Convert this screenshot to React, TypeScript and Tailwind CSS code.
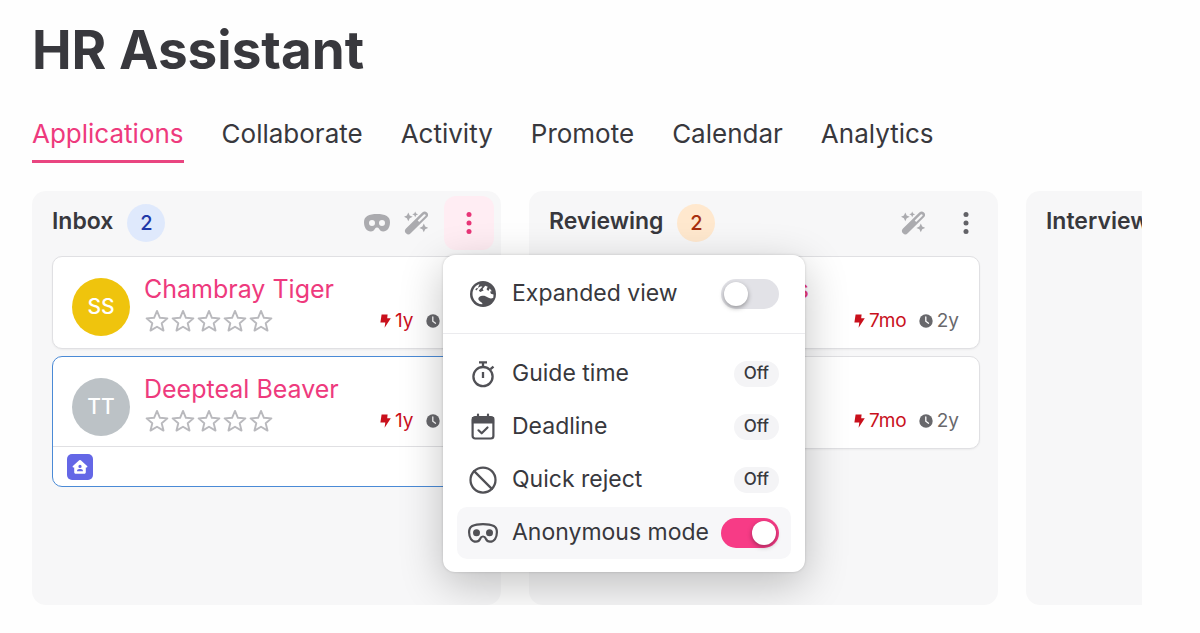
import { useState, type ReactNode } from 'react'
import { Ban } from 'lucide-react'

type Candidate = {
  name: string
  initials: string
  avatarClass: string
  activeAgo: string
  appliedAgo: string
  selected?: boolean
}

const tabs = ['Applications', 'Collaborate', 'Activity', 'Promote', 'Calendar', 'Analytics']

const inbox: Candidate[] = [
  { name: 'Chambray Tiger', initials: 'SS', avatarClass: 'bg-[#efc40d]', activeAgo: '1y', appliedAgo: '1y' },
  { name: 'Deepteal Beaver', initials: 'TT', avatarClass: 'bg-[#bcc2c6]', activeAgo: '1y', appliedAgo: '1y', selected: true },
]

const reviewing: Candidate[] = [
  { name: 'Coral Badgers', initials: 'CB', avatarClass: 'bg-teal-500', activeAgo: '7mo', appliedAgo: '2y' },
  { name: 'Amber Otter', initials: 'AO', avatarClass: 'bg-sky-500', activeAgo: '7mo', appliedAgo: '2y' },
]

function MaskIcon() {
  return (
    <svg className="h-[18px] w-[26px]" viewBox="0 0 26 18" fill="currentColor" fillRule="evenodd" aria-hidden="true">
      <path d="M3.200 2C5.800.6 9.200 0 13 0s7.200.6 9.800 2C25 3.300 26 5.500 26 8.300 26 13.800 23.200 17.500 19.200 17.500c-2.200 0-3.300-1-4.300-2.900-.8-1.600-3-1.600-3.800 0-1 1.900-2.100 2.900-4.300 2.900C2.800 17.500 0 13.800 0 8.300 0 5.500 1 3.300 3.200 2zM8 5.900a3 3 0 1 0 0 6 3 3 0 0 0 0-6zm10 0a3 3 0 1 0 0 6 3 3 0 0 0 0-6z" />
    </svg>
  )
}

function MaskOutlineIcon() {
  return (
    <svg className="h-5 w-[30px] shrink-0" viewBox="0 0 30 20" fill="none" stroke="currentColor" strokeWidth="2.200" aria-hidden="true">
      <path d="M4.200 3C7 1.600 10.800 1.100 15 1.100s8 .5 10.800 1.900c2 1.100 3.100 3.300 3.100 6.300 0 5.400-2.700 9.400-6.900 9.400-2.300 0-3.400-1.200-4.300-3.200-.5-1.300-1.500-2-2.700-2s-2.200.7-2.700 2c-.9 2-2 3.200-4.300 3.200-4.200 0-6.900-4-6.900-9.400C1.100 6.300 2.200 4.100 4.200 3z" />
      <circle cx="8.500" cy="9.700" r="3.500" fill="currentColor" stroke="none" />
      <circle cx="21.500" cy="9.700" r="3.500" fill="currentColor" stroke="none" />
    </svg>
  )
}

function WandIcon() {
  return (
    <svg className="size-6" viewBox="0 0 24 24" fill="currentColor" fillRule="evenodd" aria-hidden="true">
      <path d="M18.300 1.600a3.300 3.300 0 0 1 4.700 4.700L6.700 22.300a3.300 3.300 0 0 1-4.700-4.700zm1.500 1.900-6.100 6 1.500 1.500 6.100-6a1.060 1.060 0 0 0-1.500-1.500z" />
      <path d="M4.300 1.500 5.700 4.400 8.700 5.800 5.700 7.200 4.300 10.200 2.900 7.200 0 5.800 2.900 4.400zM11.200.4l.9 2 2 .9-2 .9-.9 2-.9-2-2-.9 2-.9zM19.800 12.600l1.400 2.900 3 1.400-3 1.400-1.400 3-1.400-3-3-1.400 3-1.400z" />
    </svg>
  )
}

function DotsIcon() {
  return (
    <svg className="h-6 w-1.5" viewBox="0 0 6 24" fill="currentColor" aria-hidden="true">
      <circle cx="3" cy="3.500" r="2.500" />
      <circle cx="3" cy="12" r="2.500" />
      <circle cx="3" cy="20.500" r="2.500" />
    </svg>
  )
}

function BoltIcon() {
  return (
    <svg className="h-[14px] w-[11px]" viewBox="0 0 11 14" fill="currentColor" aria-hidden="true">
      <path d="M1.600.4h6L7.200 4.200h3.600L4.600 13.800l.7-5.400H.4z" />
    </svg>
  )
}

function ClockIcon() {
  return (
    <svg className="size-[14px]" viewBox="0 0 14 14" aria-hidden="true">
      <circle cx="7" cy="7" r="6.700" fill="currentColor" />
      <path d="M6.800 3v4.200l2.700 2" fill="none" stroke="#fff" strokeWidth="1.300" strokeLinecap="round" />
    </svg>
  )
}

function StarIcon() {
  return (
    <svg className="size-[26px]" viewBox="0 0 26 26" fill="none" stroke="currentColor" strokeWidth="1.900" strokeLinejoin="round" aria-hidden="true">
      <path d="m13 2.900 2.900 6.900 7.500.6-5.700 4.900 1.800 7.300L13 18.700l-6.500 3.900 1.800-7.300-5.700-4.900 7.500-.6z" />
    </svg>
  )
}

function GlobeIcon() {
  return (
    <svg className="size-[26px] shrink-0" viewBox="0 0 26 26" aria-hidden="true">
      <circle cx="13" cy="13" r="13" fill="currentColor" />
      <path
        d="M9.500 3C5.300 4.500 2.500 8.400 2.500 13c0 4.600 3 8.500 7.200 9.900l2.600.3c1-1.400-2.600-2.600-3.600-4.200-1-2 .8-4 3.300-4.200 2.600-.2 4 .4 5.500 1.500 1.800 1.300 4.200 1.500 5.800.4l.2-3.200-2.600-.8-.8-2.300 1.700-.2-2-2.600-1.500 2.300-1.800-1.600 1.200-2.600-2.500-.9-2.600 3.200 1 1.400-3.400 1.600-1.400-1.400 3.600-3.800-1.600-.6-3 1.900z"
        fill="#fff"
      />
      <path d="m5.300 8.300 1.600-1.400 1.300.7-2 1.800zM9 4.600l2.300-.8-1 1.800z" fill="currentColor" />
    </svg>
  )
}

function StopwatchIcon() {
  return (
    <svg className="size-7 shrink-0" viewBox="0 0 28 28" fill="none" stroke="currentColor" strokeWidth="2.300" aria-hidden="true">
      <circle cx="14" cy="16.600" r="9.600" />
      <path d="M10 2.300h8M14 2.500V7M21.500 9.200l3-2.600M14 12v6" />
    </svg>
  )
}

function CalendarCheckIcon() {
  return (
    <svg className="size-7 shrink-0" viewBox="0 0 28 28" fill="none" stroke="currentColor" strokeWidth="2.200" strokeLinecap="round" aria-hidden="true">
      <rect x="3.600" y="4.200" width="20.800" height="21.300" rx="2.500" />
      <path d="M4 5h20v4.500H4zM9 1.600v3M19 1.600v3" fill="currentColor" />
      <path d="m9.500 17.300 3.200 3 5.800-5.800" strokeLinejoin="round" />
    </svg>
  )
}

function HouseUserIcon() {
  return (
    <svg className="size-4" viewBox="0 0 16 16" fill="currentColor" fillRule="evenodd" aria-hidden="true">
      <path d="M7.200 1.300a1.200 1.200 0 0 1 1.600 0l6.300 5.600c.6.600.3 1.500-.5 1.500h-.8v4.800c0 .9-.6 1.500-1.500 1.500H3.700c-.9 0-1.500-.6-1.500-1.500V8.400h-.8c-.8 0-1.100-.9-.5-1.500zM8 5.800a1.600 1.600 0 1 0 0 3.200 1.600 1.600 0 0 0 0-3.200zM5 12.300h6c0-1.400-1-2.300-2.200-2.300H7.200C6 10 5 10.900 5 12.300z" />
    </svg>
  )
}

function CandidateCard({ candidate }: { candidate: Candidate }) {
  return (
    <article
      className={`rounded-[10px] border bg-white ${
        candidate.selected ? 'border-[#4a8ad6]' : 'border-[#e0e0e3] pb-0.5 shadow-xs'
      }`}
    >
      <div className="flex items-center gap-3.5 pt-4 pr-5 pb-2.5 pl-[19px]">
        <div
          className={`mt-1 flex size-[58px] shrink-0 items-center justify-center rounded-full text-[21px] font-medium text-white ${candidate.avatarClass}`}
        >
          {candidate.initials}
        </div>
        <div className="min-w-0 flex-1">
          <a href="#" className="block truncate text-[25px] leading-[33px] text-[#ee3a7d]">
            {candidate.name}
          </a>
          <div className="flex h-[30px] items-center justify-between">
            <div className="flex text-[#b9b9bd]" role="img" aria-label="Not rated">
              {[1, 2, 3, 4, 5].map((star) => (
                <StarIcon key={star} />
              ))}
            </div>
            <div className="flex items-center gap-3 text-[19px] leading-7">
              <span className="flex items-center gap-1 text-[#c9101c]">
                <BoltIcon />
                {candidate.activeAgo}
              </span>
              <span className="flex items-center gap-1 text-[#68686c]">
                <ClockIcon />
                {candidate.appliedAgo}
              </span>
            </div>
          </div>
        </div>
      </div>
      {candidate.selected && (
        <div className="border-t border-[#e0e0e3] px-3.5 pt-[7px] pb-1.5">
          <span className="flex size-[26px] items-center justify-center rounded-[5px] bg-[#6467e6] text-white">
            <HouseUserIcon />
          </span>
        </div>
      )}
    </article>
  )
}

function Switch({ id, checked, onChange }: { id: string; checked: boolean; onChange: (value: boolean) => void }) {
  return (
    <input
      id={id}
      type="checkbox"
      role="switch"
      checked={checked}
      onChange={(e) => onChange(e.target.checked)}
      className="flex h-[30px] w-[58px] shrink-0 cursor-pointer appearance-none items-center rounded-full bg-[#e2e2e7] px-[3px] before:size-6 before:rounded-full before:bg-white before:shadow-[0_2px_5px_rgba(0,0,0,0.35)] before:content-[''] checked:justify-end checked:bg-[#f73b86]"
    />
  )
}

function MenuOption({ icon, label }: { icon: ReactNode; label: string }) {
  return (
    <button type="button" className="flex h-[52px] w-full items-center rounded-[10px] px-3 text-left">
      <span className="flex w-7 justify-center text-[#515156]">{icon}</span>
      <span className="ml-[15px] flex-1">{label}</span>
      <span className="flex h-[26px] items-center rounded-full bg-[#f4f4f6] px-2.5 text-[17px] font-medium">Off</span>
    </button>
  )
}

function ColumnMenu() {
  const [expanded, setExpanded] = useState(false)
  const [anonymous, setAnonymous] = useState(true)

  return (
    <div className="absolute top-[59px] -left-px z-10 w-[362px] rounded-xl bg-white text-[23px] text-[#38383d] shadow-[0_12px_44px_rgba(0,0,0,0.24),0_0_3px_rgba(0,0,0,0.16)]">
      <div className="border-b border-[#ebebee] px-3.5 py-[13px]">
        <label htmlFor="expanded" className="flex h-[52px] items-center px-3">
          <span className="flex w-7 justify-center text-[#515156]">
            <GlobeIcon />
          </span>
          <span className="ml-[15px] flex-1">Expanded view</span>
          <Switch id="expanded" checked={expanded} onChange={setExpanded} />
        </label>
      </div>
      <div className="flex flex-col gap-px px-3.5 pt-3.5 pb-[13px]">
        <MenuOption icon={<StopwatchIcon />} label="Guide time" />
        <MenuOption icon={<CalendarCheckIcon />} label="Deadline" />
        <MenuOption icon={<Ban className="size-[30px] shrink-0" strokeWidth={1.8} />} label="Quick reject" />
        <label htmlFor="anonymous" className="flex h-[52px] items-center rounded-[10px] bg-[#f7f7f9] px-3">
          <span className="flex w-7 justify-center text-[#515156]">
            <MaskOutlineIcon />
          </span>
          <span className="ml-[15px] flex-1 whitespace-nowrap">Anonymous mode</span>
          <Switch id="anonymous" checked={anonymous} onChange={setAnonymous} />
        </label>
      </div>
    </div>
  )
}

type ColumnProps = {
  title: string
  countClass: string
  candidates: Candidate[]
  masked?: boolean
  menuOpen?: boolean
}

function Column({ title, countClass, candidates, masked, menuOpen }: ColumnProps) {
  return (
    <section className="w-[469px] shrink-0 rounded-[14px] bg-[#f7f7f8]">
      <header className="flex h-[63px] items-center pr-[7px] pl-5 text-[#ababaf]">
        <h2 className="pb-1 text-[23px] leading-8 font-semibold text-[#38383d]">{title}</h2>
        <span
          className={`ml-3.5 flex size-[38px] items-center justify-center rounded-full text-[20px] font-medium ${countClass}`}
        >
          {candidates.length}
        </span>
        <div className="ml-auto flex items-center gap-4">
          <div className="flex items-center gap-3.5">
            {masked && <MaskIcon />}
            <WandIcon />
          </div>
          <div className="relative">
            <button
              type="button"
              aria-label={`${title} options`}
              aria-expanded={!!menuOpen}
              className={`flex h-[54px] w-[50px] items-center justify-center rounded-xl ${
                menuOpen ? 'bg-[#ffedf3] text-[#e83577]' : 'text-[#626267]'
              }`}
            >
              <DotsIcon />
            </button>
            {menuOpen && <ColumnMenu />}
          </div>
        </div>
      </header>
      <div className="flex flex-col gap-[7px] pt-0.5 pr-[18px] pl-5">
        {candidates.map((candidate) => (
          <CandidateCard key={candidate.name} candidate={candidate} />
        ))}
      </div>
    </section>
  )
}

export default function App() {
  return (
    <div className="flex min-h-screen flex-col bg-[#fefefe] pr-[58px] pb-7 pl-8 font-[Inter,sans-serif] text-[#38383d]">
      <h1 className="pt-4 text-[53px] leading-[68px] font-bold">HR Assistant</h1>
      <nav className="mt-6 flex gap-[38px] text-[26px] leading-[52px]">
        {tabs.map((tab, index) => (
          <a
            key={tab}
            href="#"
            className={index === 0 ? 'border-b-[3px] border-[#e94580] text-[#ee3a7d]' : 'border-b-[3px] border-transparent'}
          >
            {tab}
          </a>
        ))}
      </nav>
      <main className="mt-7 flex flex-1 gap-7 overflow-hidden">
        <Column title="Inbox" countClass="bg-[#dfe9fc] text-[#1f38a8]" candidates={inbox} masked menuOpen />
        <Column title="Reviewing" countClass="bg-[#ffe8ce] text-[#a8300f]" candidates={reviewing} />
        <Column title="Interviewing" countClass="bg-[#dff5e5] text-[#166534]" candidates={[]} />
      </main>
    </div>
  )
}
